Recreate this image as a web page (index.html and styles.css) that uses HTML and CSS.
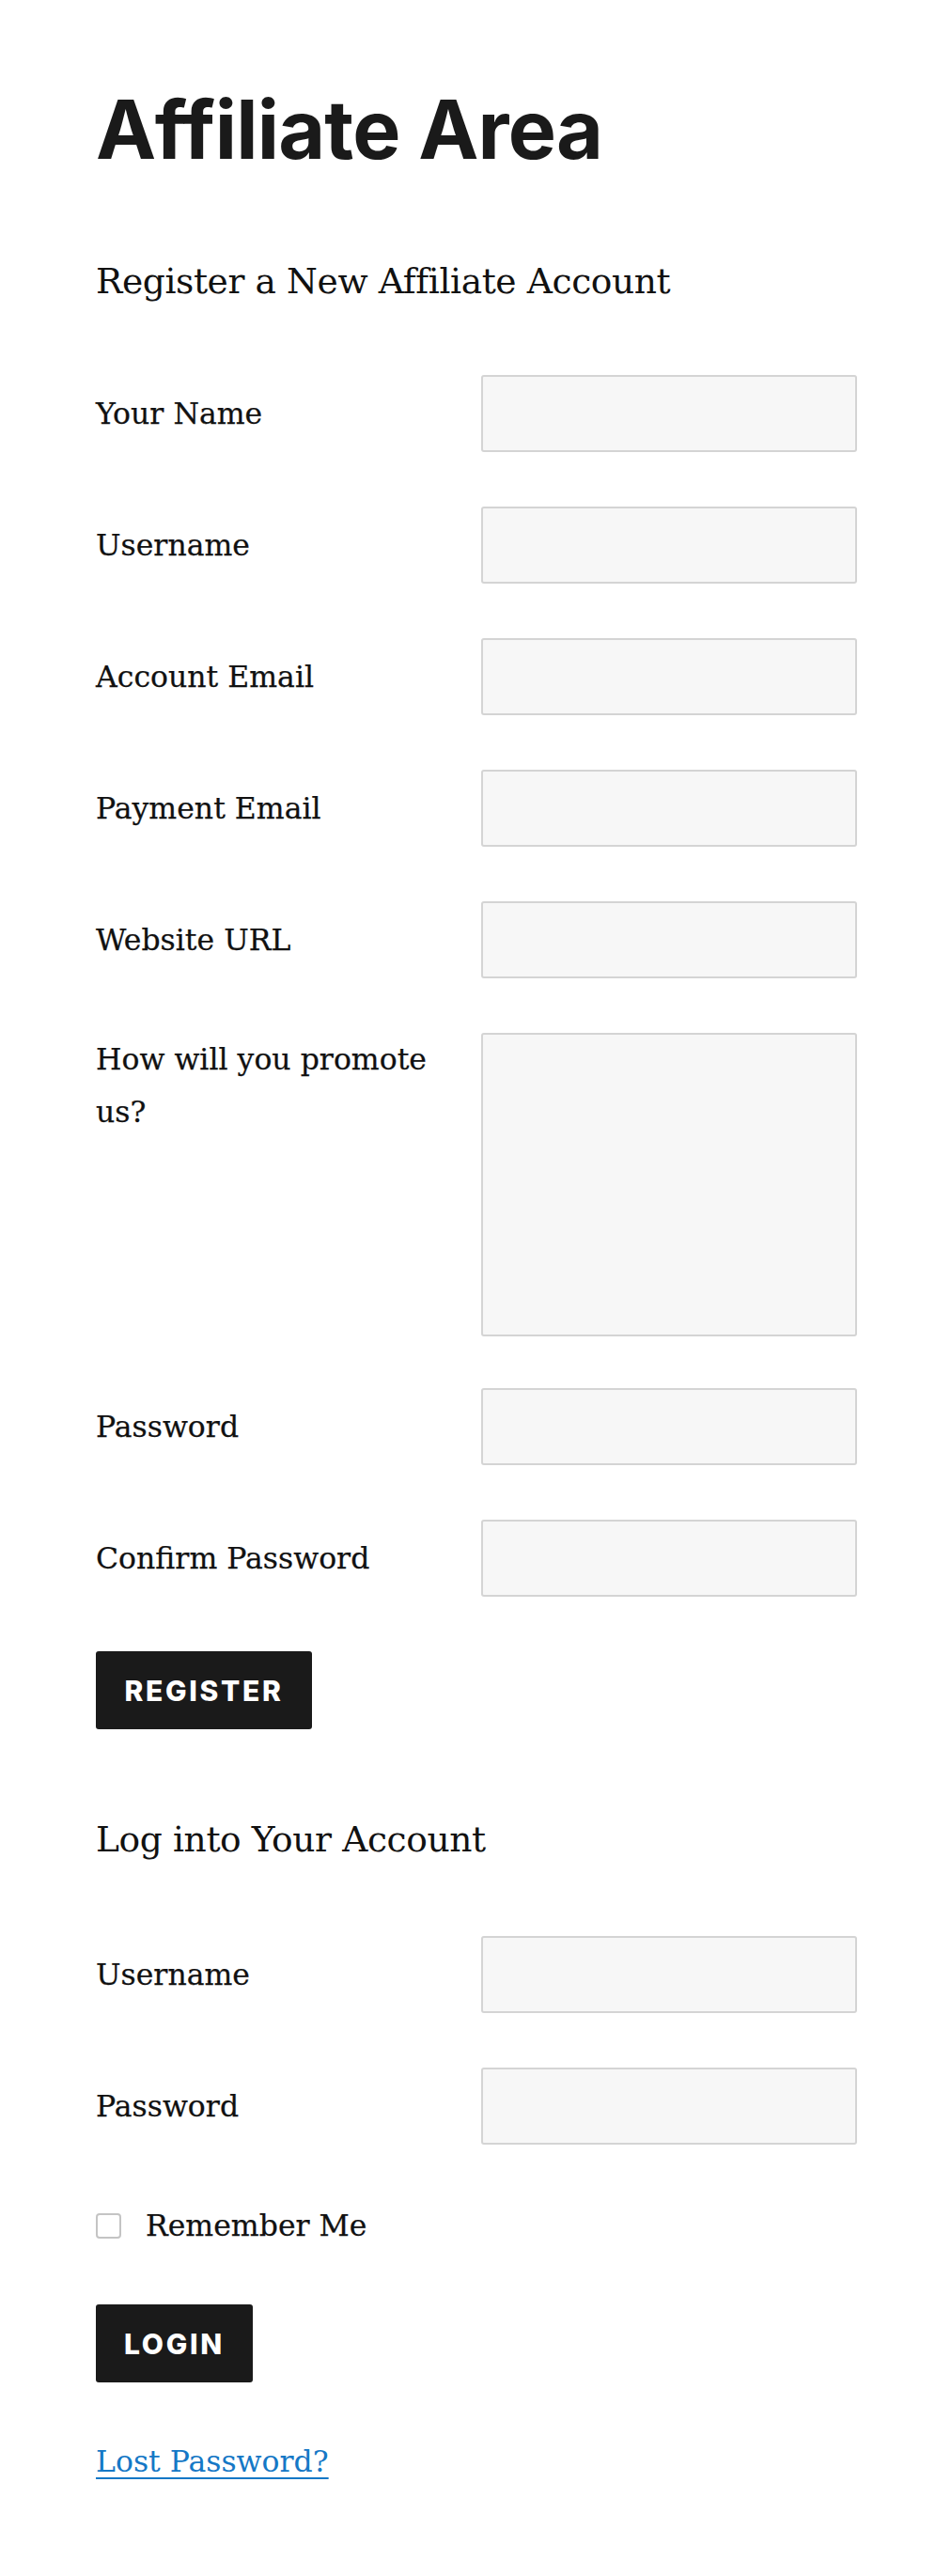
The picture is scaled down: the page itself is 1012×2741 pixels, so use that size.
FILE: index.html
```html
<!DOCTYPE html>
<html lang="en">
<head>
<meta charset="utf-8">
<title>Affiliate Area</title>
<link rel="stylesheet" href="styles.css">
</head>
<body>
<main class="page">
  <h1 class="title">Affiliate Area</h1>

  <h2 class="section-title first">Register a New Affiliate Account</h2>
  <form class="form">
    <div class="row"><label class="label">Your Name</label><input class="field" type="text"></div>
    <div class="row"><label class="label">Username</label><input class="field" type="text"></div>
    <div class="row"><label class="label">Account Email</label><input class="field" type="text"></div>
    <div class="row"><label class="label">Payment Email</label><input class="field" type="text"></div>
    <div class="row"><label class="label">Website URL</label><input class="field" type="text"></div>
    <div class="row row-top"><label class="label">How will you promote us?</label><textarea class="field area"></textarea></div>
    <div class="row"><label class="label">Password</label><input class="field" type="password"></div>
    <div class="row"><label class="label">Confirm Password</label><input class="field" type="password"></div>
    <div class="actions"><button class="btn btn-register" type="button">Register</button></div>
  </form>

  <h2 class="section-title second">Log into Your Account</h2>
  <form class="form login">
    <div class="row"><label class="label">Username</label><input class="field" type="text"></div>
    <div class="row"><label class="label">Password</label><input class="field" type="password"></div>
    <div class="remember"><input class="check" type="checkbox"><label class="label">Remember Me</label></div>
    <div class="actions"><button class="btn btn-login" type="button">Login</button></div>
  </form>

  <p class="lost"><a href="#">Lost Password?</a></p>
</main>
</body>
</html>
```

FILE: styles.css
```css
* { box-sizing: border-box; }

html, body {
  margin: 0;
  padding: 0;
  background: #ffffff;
}

body {
  color: #1a1a1a;
  font-family: "DejaVu Serif", "Liberation Serif", serif;
}

.page {
  width: 810px;
  margin-left: 102px;
  padding-top: 86px;
  padding-bottom: 80px;
}

.title {
  margin: 0;
  font-family: "Inter", "Lato", sans-serif;
  font-weight: 700;
  font-size: 86px;
  line-height: 104px;
  letter-spacing: -0.8px;
  color: #1a1a1a;
}

.section-title {
  margin: 0;
  font-family: "DejaVu Serif", serif;
  font-weight: 400;
  font-size: 37.6px;
  line-height: 54px;
  letter-spacing: -0.4px;
  color: #111111;
}

.section-title.first { margin-top: 82px; margin-bottom: 73px; }
.section-title.second { margin-top: 90px; margin-bottom: 76px; }

.form {
  display: flex;
  flex-direction: column;
  gap: 58px;
  margin: 0;
}

.row {
  display: flex;
  align-items: center;
  justify-content: space-between;
}

.row-top { align-items: flex-start; margin-bottom: -3px; }

.label {
  width: 380px;
  font-size: 31.5px;
  line-height: 56px;
  color: #111111;
  -webkit-text-stroke: 0.25px #111111;
}

.field {
  width: 400px;
  height: 82px;
  flex: none;
  margin: 0;
  background: #f7f7f7;
  border: 2px solid #d4d4d4;
  border-radius: 3px;
  font: inherit;
}

.area {
  height: 323px;
  resize: none;
}

.actions { display: flex; }

.btn {
  height: 83px;
  padding: 0 28px;
  border: 0;
  border-radius: 3px;
  background: #1a1a1a;
  color: #ffffff;
  font-family: "Inter", "Lato", sans-serif;
  font-weight: 800;
  font-size: 30px;
  letter-spacing: 0.09em;
  text-transform: uppercase;
}

.btn-register { width: 230px; }
.btn-login { width: 167px; }

.login .actions { margin-top: -2px; }

.remember {
  display: flex;
  align-items: center;
  gap: 26px;
}

.remember .label { width: auto; }

.check {
  appearance: none;
  -webkit-appearance: none;
  width: 27px;
  height: 27px;
  margin: 0;
  border: 2px solid #c4c4c4;
  border-radius: 4px;
  background: #ffffff;
}

.lost {
  margin: 56px 0 0;
  font-size: 31.5px;
  line-height: 56px;
}

.lost a {
  color: #1578c6;
  text-decoration: underline;
  text-decoration-thickness: 2px;
  text-underline-offset: 6px;
}
```
